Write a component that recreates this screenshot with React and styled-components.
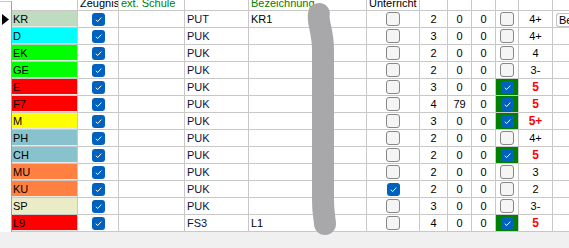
import styled, { createGlobalStyle } from 'styled-components'

const GlobalStyle = createGlobalStyle`
  html, body {
    margin: 0;
    padding: 0;
    background: #f0f0f0;
    overflow: hidden;
  }
  body {
    font-family: "Liberation Sans", Arial, sans-serif;
    font-size: 11px;
    color: #000;
  }
`

const COLS = '12px 66px 41px 66px 64px 118px 53px 28px 24px 24px 23px 34px 1fr'

const Page = styled.div`
  position: relative;
  width: 569px;
  height: 248px;
  overflow: hidden;
  background: #f0f0f0;
`

const Grid = styled.div`
  background: #fff;
  display: flex;
  flex-direction: column;
`

const HeaderRow = styled.div`
  display: grid;
  grid-template-columns: ${COLS};
  height: 11px;
`

const HeaderCell = styled.div`
  box-sizing: border-box;
  height: 11px;
  border-right: 1px solid #c8c8c8;
  border-bottom: 1px solid #c8c8c8;
  display: flex;
  align-items: flex-end;
  overflow: hidden;
  padding-left: 2px;
  color: ${(p) => (p.$green ? '#008000' : '#000')};
  line-height: 13px;
  white-space: nowrap;
  &:last-child {
    border-right: none;
  }
`

const IndicatorHead = styled.div`
  border-right: 1px solid #a0a0a0;
  border-top: 1px solid #c8c8c8;
  margin-top: 1px;
`

const Row = styled.div`
  display: grid;
  grid-template-columns: ${COLS};
  height: 17px;
`

const Cell = styled.div`
  box-sizing: border-box;
  height: 17px;
  border-right: 1px solid #c8c8c8;
  border-bottom: 1px solid #c8c8c8;
  display: flex;
  align-items: center;
  justify-content: ${(p) => (p.$center ? 'center' : 'flex-start')};
  padding-left: ${(p) => (p.$center ? '0' : '2px')};
  background: ${(p) => p.$bg || 'transparent'};
  color: ${(p) => p.$color || '#000'};
  white-space: nowrap;
  overflow: hidden;
`

const Indicator = styled.div`
  border-right: 1px solid #a0a0a0;
  display: flex;
  align-items: center;
  justify-content: flex-start;
  padding-left: 2px;
`

const FachCell = styled.div`
  box-sizing: border-box;
  height: 17px;
  border-right: 1px solid #c8c8c8;
  border-bottom: 1px solid #c8c8c8;
  padding-bottom: 1px;
  background: #e8e8e8;
`

const FachColor = styled.div`
  height: 100%;
  background: ${(p) => p.$bg};
  display: flex;
  align-items: center;
  padding-left: 1px;
`

const Grade = styled.span`
  color: ${(p) => (p.$bad ? '#ff0000' : '#000')};
  font-weight: ${(p) => (p.$bad ? 'bold' : 'normal')};
  font-size: ${(p) => (p.$bad ? '12px' : '11px')};
`

const Box = styled.span`
  box-sizing: border-box;
  width: 14px;
  height: 14px;
  border-radius: 3px;
  background: #f5f5f5;
  border: 1px solid #878787;
  display: inline-block;
`

const CheckedBox = styled.span`
  width: 13px;
  height: 13px;
  border-radius: 3px;
  background: #0062be;
  display: inline-flex;
  align-items: center;
  justify-content: center;
`

const MoreButton = styled.div`
  box-sizing: border-box;
  margin: 1px 0 0 3px;
  height: 14px;
  border: 1px solid #c4c4c4;
  border-right: none;
  border-radius: 3px 0 0 3px;
  background: #fdfdfd;
  padding-left: 2px;
  line-height: 12px;
`

const Blob = styled.svg`
  position: absolute;
  left: 0;
  top: 0;
  pointer-events: none;
`

function Check({ on }) {
  if (!on) return <Box />
  return (
    <CheckedBox>
      <svg width="9" height="9" viewBox="0 0 9 9">
        <path d="M1.8 4.8 L3.7 6.5 L7.3 2.6" fill="none" stroke="#fff" strokeWidth="1" />
      </svg>
    </CheckedBox>
  )
}

const rows = [
  { fach: 'KR', bg: '#c0dcc0', art: 'PUT', bez: 'KR1', u: false, a: 2, b: 0, c: 0, m: false, g: '4+', btn: true, cur: true },
  { fach: 'D', bg: '#00ffff', art: 'PUK', u: false, a: 3, b: 0, c: 0, m: false, g: '4+' },
  { fach: 'EK', bg: '#00ff00', art: 'PUK', u: false, a: 2, b: 0, c: 0, m: false, g: '4' },
  { fach: 'GE', bg: '#00ff00', art: 'PUK', u: false, a: 2, b: 0, c: 0, m: false, g: '3-' },
  { fach: 'E', bg: '#ff0000', art: 'PUK', u: false, a: 3, b: 0, c: 0, m: true, g: '5' },
  { fach: 'F7', bg: '#ff0000', art: 'PUK', u: false, a: 4, b: 79, c: 0, m: true, g: '5' },
  { fach: 'M', bg: '#ffff00', art: 'PUK', u: false, a: 3, b: 0, c: 0, m: true, g: '5+' },
  { fach: 'PH', bg: '#88c2cc', art: 'PUK', u: false, a: 2, b: 0, c: 0, m: false, g: '4+' },
  { fach: 'CH', bg: '#88c2cc', art: 'PUK', u: false, a: 2, b: 0, c: 0, m: true, g: '5' },
  { fach: 'MU', bg: '#ff8040', art: 'PUK', u: false, a: 2, b: 0, c: 0, m: false, g: '3' },
  { fach: 'KU', bg: '#ff8040', art: 'PUK', u: true, a: 2, b: 0, c: 0, m: false, g: '2' },
  { fach: 'SP', bg: '#eaecc8', art: 'PUK', u: false, a: 3, b: 0, c: 0, m: false, g: '3-' },
  { fach: 'L9', bg: '#ff0000', art: 'FS3', bez: 'L1', u: false, a: 4, b: 0, c: 0, m: true, g: '5' },
]

export default function App() {
  return (
    <Page>
      <GlobalStyle />
      <Grid>
        <HeaderRow>
          <IndicatorHead />
          <HeaderCell />
          <HeaderCell>Zeugnis</HeaderCell>
          <HeaderCell $green>ext. Schule</HeaderCell>
          <HeaderCell />
          <HeaderCell $green>Bezeichnung</HeaderCell>
          <HeaderCell>Unterricht</HeaderCell>
          <HeaderCell />
          <HeaderCell />
          <HeaderCell />
          <HeaderCell />
          <HeaderCell />
          <HeaderCell />
        </HeaderRow>
        {rows.map((r) => (
          <Row key={r.fach}>
            <Indicator>
              {r.cur && (
                <svg width="7" height="11" viewBox="0 0 7 11">
                  <polygon points="0,0 7,5.5 0,11" fill="#000" />
                </svg>
              )}
            </Indicator>
            <FachCell>
              <FachColor $bg={r.bg}>{r.fach}</FachColor>
            </FachCell>
            <Cell $center>
              <Check on />
            </Cell>
            <Cell />
            <Cell $color="#10103a">{r.art}</Cell>
            <Cell>{r.bez}</Cell>
            <Cell $center>
              <Check on={r.u} />
            </Cell>
            <Cell $center>{r.a}</Cell>
            <Cell $center>{r.b}</Cell>
            <Cell $center>{r.c}</Cell>
            <Cell $center $bg={r.m ? '#008000' : undefined}>
              <Check on={r.m} />
            </Cell>
            <Cell $center>
              <Grade $bad={r.g.startsWith('5')}>{r.g}</Grade>
            </Cell>
            <Cell style={{ borderRight: 'none', padding: 0 }}>
              {r.btn && <MoreButton>Be</MoreButton>}
            </Cell>
          </Row>
        ))}
      </Grid>
      <Blob width="569" height="248" viewBox="0 0 569 248">
        <path
          d="M319 14 C317 22 323 30 323 50 L323 200 C323 214 325 220 325 224"
          fill="none"
          stroke="#a8a8aa"
          strokeWidth="22"
          strokeLinecap="round"
        />
      </Blob>
    </Page>
  )
}
